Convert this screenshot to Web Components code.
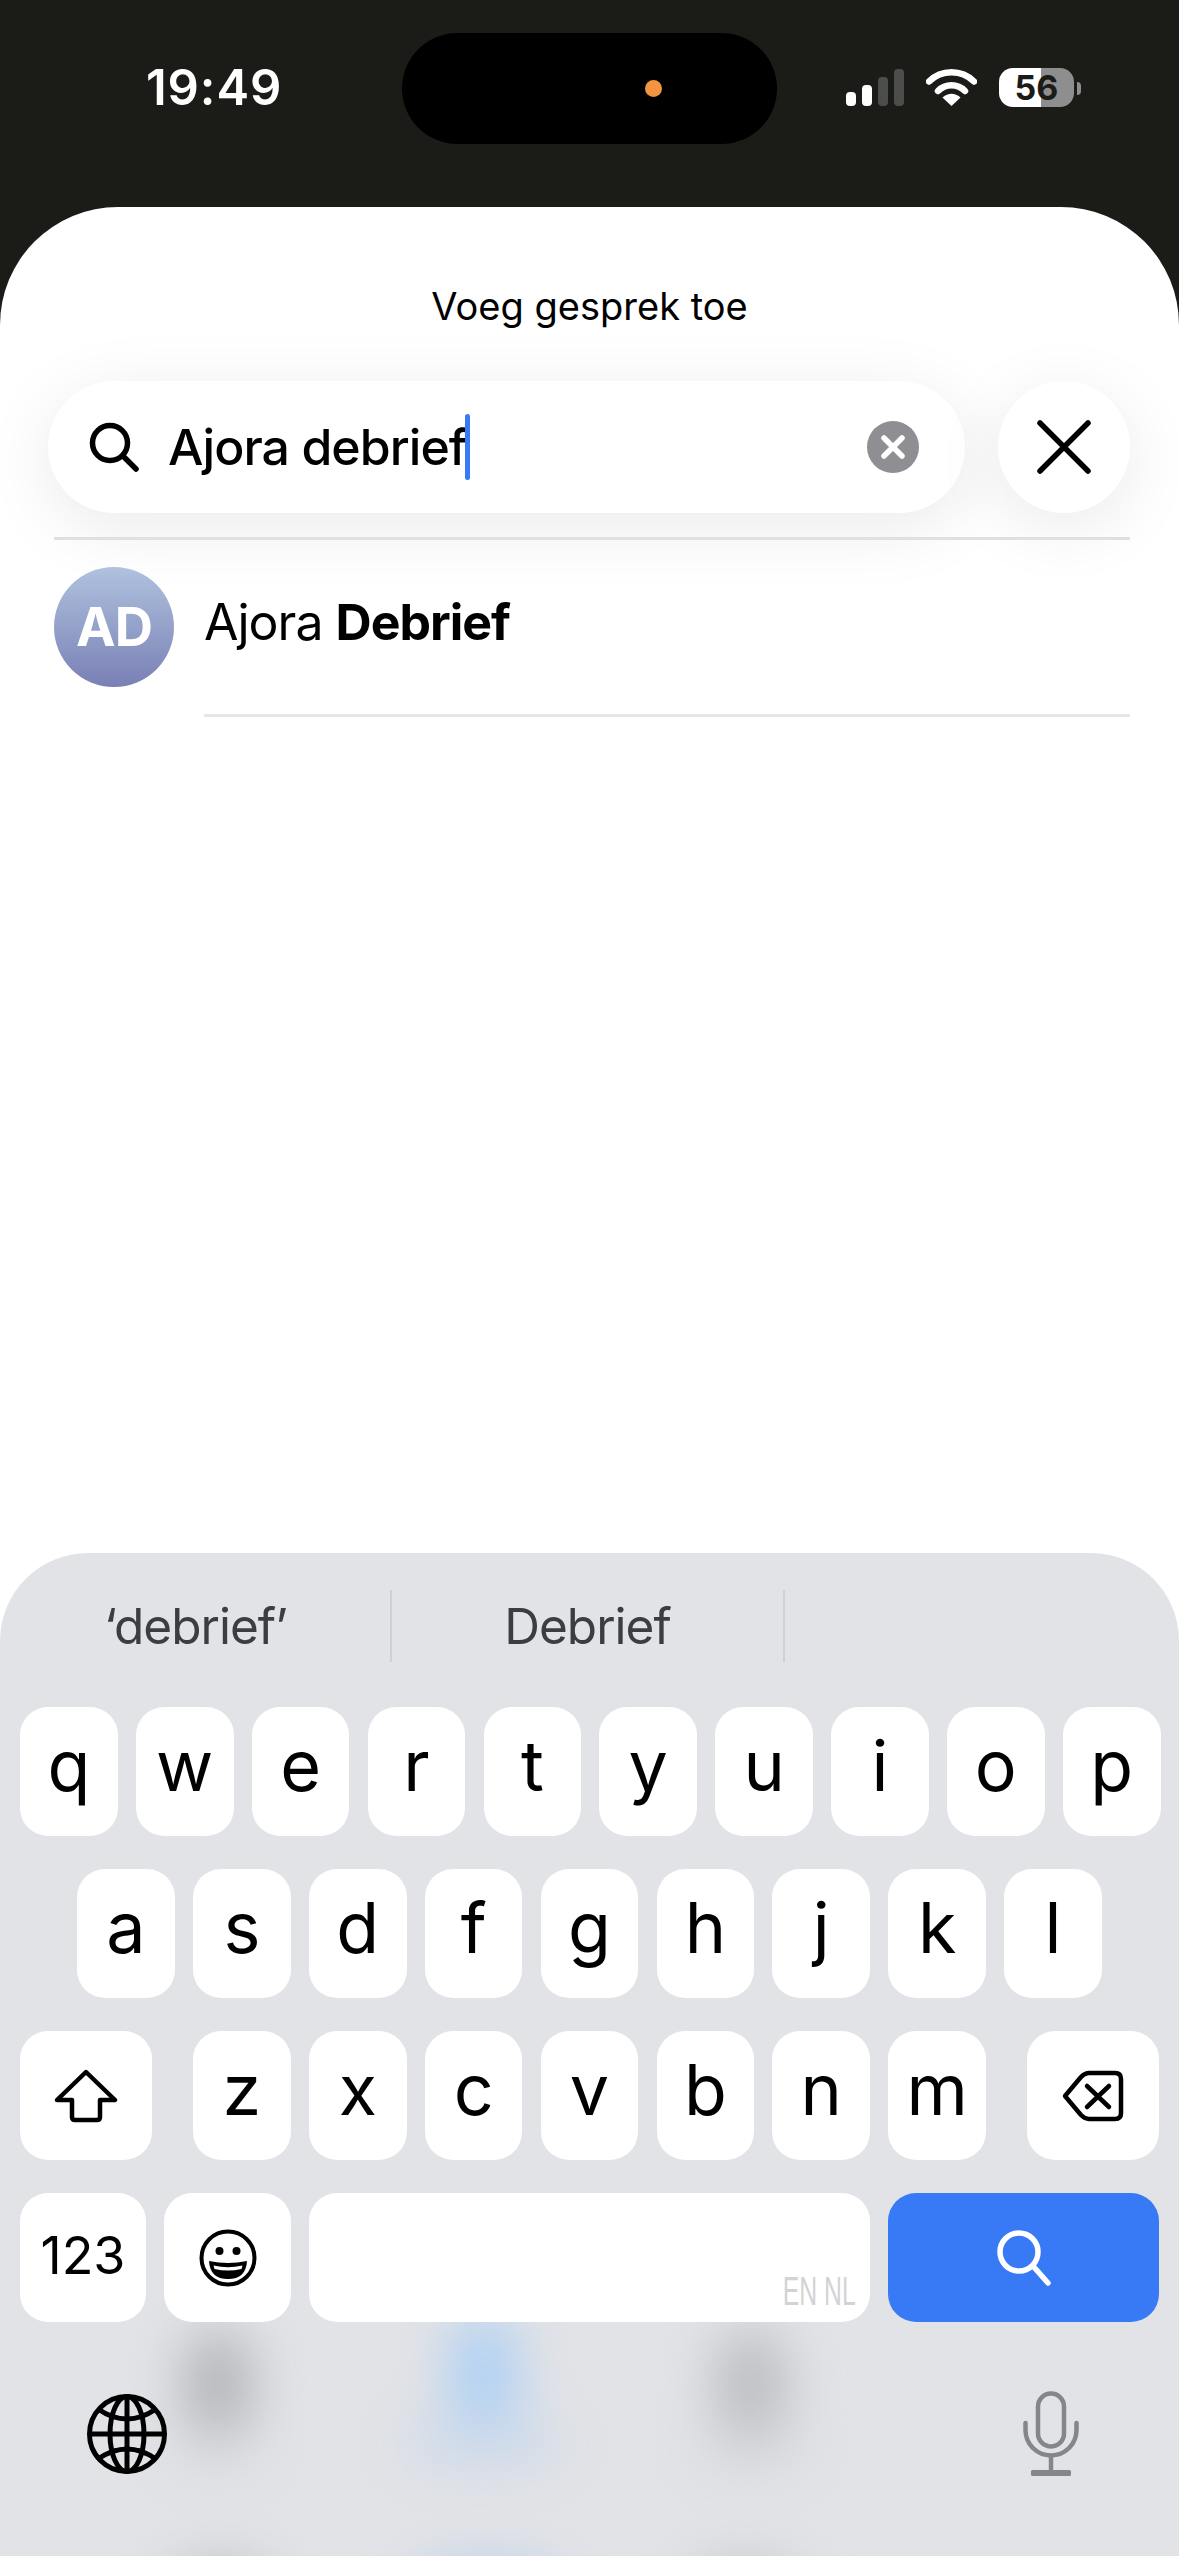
<!DOCTYPE html>
<html lang="nl">
<head>
<meta charset="utf-8">
<title>Voeg gesprek toe</title>
<style>
    html, body { margin: 0; padding: 0; background: #1b1c18; }
    body { font-family: Inter, "Noto Sans", sans-serif; }
    #phone { display: flex; flex-direction: column; width: 1179px; height: 2556px; overflow: hidden; }
</style>
</head>
<body>
<div id="phone">
    <status-bar></status-bar>
    <add-chat-sheet heading="Voeg gesprek toe">
        <search-field value="Ajora debrief"></search-field>
        <result-row initials="AD">Ajora <b>Debrief</b></result-row>
    </add-chat-sheet>
</div>

<script>
class StatusBar extends HTMLElement
{
    constructor()
    {
        super();
        this.shadow = this.attachShadow({ mode: "open" });
    }

    connectedCallback()
    {
        this.shadow.innerHTML = `
            <style>
                :host { display: grid; grid-template-columns: 402px 375px 1fr; flex: 0 0 207px; height: 207px; background: #1b1c18; color: #fff; }
                .time { margin-top: 60px; padding-left: 146px; font-size: 49px; line-height: 56px; font-weight: 600; letter-spacing: .9px; }
                .island { position: relative; height: 111px; margin-top: 33px; border-radius: 56px; background: #000; }
                .dot { position: absolute; left: 243px; top: 47px; width: 17px; height: 17px; border-radius: 50%; background: #f49440; }
                .right { display: flex; align-items: flex-start; margin-top: 68px; padding-left: 69px; }
                .bars { display: flex; align-items: flex-end; gap: 6px; height: 38px; }
                .bars i { display: block; width: 10px; border-radius: 4px; background: #4c4e4b; }
                .bars i.on { background: #fff; }
                .wifi { margin-left: 22px; }
                .battery { display: flex; align-items: center; justify-content: center; width: 75px; height: 39px; margin-left: 22px; border-radius: 14px; background: linear-gradient(90deg, #fff 0, #fff 42px, #8e8e8e 42px); color: #1b1c18; font-size: 34px; font-weight: 700; letter-spacing: 0; }
                .nub { width: 4px; height: 13px; margin: 14px 0 0 3px; border-radius: 0 7px 7px 0; background: #8e8e8e; }
            </style>
            <div class="time">19:49</div>
            <div class="island"><span class="dot"></span></div>
            <div class="right">
                <div class="bars">
                    <i class="on" style="height:14px"></i><i class="on" style="height:21px"></i><i style="height:29px"></i><i style="height:37px"></i>
                </div>
                <svg class="wifi" width="51" height="38" viewBox="0 0 51 38">
                    <path d="M3 13.5a32 32 0 0 1 45 0" fill="none" stroke="#fff" stroke-width="6.5" stroke-linecap="round"/>
                    <path d="M12 23a19 19 0 0 1 27 0" fill="none" stroke="#fff" stroke-width="6.5" stroke-linecap="round"/>
                    <path d="M25.5 38 L16.5 29.5 Q25.5 22 34.5 29.5 Z" fill="#fff"/>
                </svg>
                <div class="battery">56</div>
                <div class="nub"></div>
            </div>
        `;
    }
}

class AddChatSheet extends HTMLElement
{
    constructor()
    {
        super();
        this.shadow = this.attachShadow({ mode: "open" });
    }

    connectedCallback()
    {
        this.shadow.innerHTML = `
            <style>
                :host { display: flex; flex-direction: column; flex: 1; min-height: 0; border-radius: 118px 118px 0 0; background: #fff; }
                .title { margin: 0; padding-top: 77px; height: 44px; text-align: center; font-size: 38px; line-height: 44px; font-weight: 400; color: #000; }
                .list { display: flex; flex-direction: column; flex: 1; padding-top: 53px; }
                ios-keyboard { margin-top: auto; }
            </style>
            <h1 class="title">${this.getAttribute("heading")}</h1>
            <div class="list"><slot></slot></div>
            <ios-keyboard></ios-keyboard>
        `;
    }
}

class SearchField extends HTMLElement
{
    constructor()
    {
        super();
        this.shadow = this.attachShadow({ mode: "open" });
    }

    connectedCallback()
    {
        this.shadow.innerHTML = `
            <style>
                :host { display: flex; flex-direction: column; padding: 0 49px 0 48px; }
                .row { display: flex; gap: 33px; }
                .pill, .close { height: 132px; background: #fff; box-shadow: 0 14px 70px rgba(0, 0, 0, .085); }
                .pill { display: flex; align-items: center; flex: 1; padding: 0 46px 0 41px; border-radius: 66px; }
                .close { display: flex; align-items: center; justify-content: center; flex: 0 0 132px; border-radius: 50%; }
                .text { margin-left: 29px; font-size: 50px; line-height: 60px; font-weight: 500; letter-spacing: -.95px; color: #000; }
                .caret { width: 5px; height: 66px; margin-left: -2px; border-radius: 3px; background: #387af6; }
                .clear { margin-left: auto; }
                hr { height: 3px; margin: 24px 0 0 6px; border: 0; background: #e0e0e2; }
            </style>
            <div class="row">
                <div class="pill">
                    <svg width="50" height="50" viewBox="0 0 50 50" fill="none" stroke="#000" stroke-width="5.5" stroke-linecap="round">
                        <circle cx="21" cy="21" r="17.5"/><path d="M34 34 L47 47"/>
                    </svg>
                    <span class="text">${this.getAttribute("value")}</span>
                    <span class="caret"></span>
                    <svg class="clear" width="52" height="52" viewBox="0 0 52 52">
                        <circle cx="26" cy="26" r="26" fill="#8e8e93"/>
                        <path d="M17 17 L35 35 M35 17 L17 35" stroke="#fff" stroke-width="5.5" stroke-linecap="round"/>
                    </svg>
                </div>
                <div class="close">
                    <svg width="54" height="54" viewBox="0 0 54 54"><path d="M3 3 L51 51 M51 3 L3 51" stroke="#000" stroke-width="5.5" stroke-linecap="round"/></svg>
                </div>
            </div>
            <hr>
        `;
    }
}

class ResultRow extends HTMLElement
{
    constructor()
    {
        super();
        this.shadow = this.attachShadow({ mode: "open" });
    }

    connectedCallback()
    {
        this.shadow.innerHTML = `
            <style>
                :host { display: flex; align-items: flex-start; gap: 30px; margin: 0 49px 0 54px; padding-top: 27px; }
                .avatar { display: flex; align-items: center; justify-content: center; flex: 0 0 120px; height: 120px; border-radius: 50%; background: linear-gradient(#afc2de, #7980b5); color: #fff; font-size: 53px; font-weight: 700; letter-spacing: -1px; }
                .body { flex: 1; display: flex; flex-direction: column; }
                .name { height: 150px; padding-top: 25px; box-sizing: border-box; font-size: 50px; line-height: 60px; letter-spacing: -1px; color: #000; border-bottom: 3px solid #e6e6e8; }
            </style>
            <div class="avatar">${this.getAttribute("initials")}</div>
            <div class="body"><div class="name"><slot></slot></div></div>
        `;
    }
}

class KbKey extends HTMLElement
{
    constructor()
    {
        super();
        this.shadow = this.attachShadow({ mode: "open" });
    }

    connectedCallback()
    {
        this.shadow.innerHTML = `
            <style>
                :host { display: flex; align-items: center; justify-content: center; box-sizing: border-box; flex: 0 0 97.7px; height: 129px; padding-bottom: 12px; border-radius: 28px; background: #fff; color: #000; font-size: 70px; line-height: 1; }
                :host([kind="icon"]) { padding-bottom: 0; }
                :host([kind="blue"]) { padding-bottom: 0; background: #387af6; }
            </style>
            <slot></slot>
        `;
    }
}

class IosKeyboard extends HTMLElement
{
    constructor()
    {
        super();
        this.shadow = this.attachShadow({ mode: "open" });
    }

    keys(letters)
    {
        return letters.split("").map(l => `<kb-key>${l}</kb-key>`).join("");
    }

    connectedCallback()
    {
        this.shadow.innerHTML = `
            <style>
                :host { display: flex; flex-direction: column; position: relative; flex: 0 0 1003px; height: 1003px; overflow: hidden; border-radius: 88px 88px 0 0; background: #e2e3e7; }
                .blur { position: absolute; inset: 0; filter: blur(26px); }
                .blur i { position: absolute; display: block; border-radius: 50%; }
                .suggest { position: relative; display: grid; grid-template-columns: 391px 393px 1fr; height: 72px; margin-top: 37px; margin-bottom: 45px; font-size: 49.5px; line-height: 72px; letter-spacing: -1px; color: #3c3c43; text-align: center; }
                .suggest span + span { box-shadow: -1px 0 0 #cfd0d4, inset 1px 0 0 #cfd0d4; }
                .rows { position: relative; display: flex; flex-direction: column; gap: 33px; padding: 0 20px; }
                .row { display: flex; gap: 18.2px; }
                .center { justify-content: center; }
                .between { justify-content: space-between; }
                .mid { display: flex; gap: 18.2px; }
                .wide { flex: 0 0 132px; }
                .n123 { flex: 0 0 126px; font-size: 52px; padding-bottom: 4px; letter-spacing: 0; }
                .emoji { flex: 0 0 127px; }
                .space { flex: 1; position: relative; }
                .langs { position: absolute; right: 14px; bottom: 15px; font-family: "Liberation Sans", sans-serif; font-size: 40px; line-height: 32px; color: #d3d3d6; transform: scaleX(.62); transform-origin: right bottom; white-space: nowrap; }
                .go { flex: 0 0 271px; }
                .bottom { position: relative; display: flex; justify-content: space-between; align-items: center; padding: 69px 100px 0 87px; }
            </style>
            <div class="blur">
                <i style="left:182px;top:775px;width:72px;height:115px;background:#b4b5b8"></i>
                <i style="left:448px;top:760px;width:72px;height:125px;background:#aed0f4"></i>
                <i style="left:714px;top:775px;width:74px;height:115px;background:#bcbdc0"></i>
                <i style="left:170px;top:875px;width:90px;height:40px;background:#d8d9dc"></i>
                <i style="left:400px;top:865px;width:165px;height:50px;background:#cddaea"></i>
                <i style="left:695px;top:875px;width:110px;height:40px;background:#d6d7da"></i>
                <i style="left:170px;top:1018px;width:100px;height:30px;background:#a4a5a9"></i>
                <i style="left:410px;top:1018px;width:150px;height:30px;background:#9cc3ef"></i>
                <i style="left:690px;top:1018px;width:110px;height:30px;background:#b0b1b5"></i>
            </div>
            <div class="suggest">
                <span>‘debrief’</span>
                <span>Debrief</span>
                <span></span>
            </div>
            <div class="rows">
                <div class="row">${this.keys("qwertyuiop")}</div>
                <div class="row center">${this.keys("asdfghjkl")}</div>
                <div class="row between">
                    <kb-key class="wide" kind="icon">
                        <svg width="64" height="54" viewBox="-2 -2 64 54" fill="none" stroke="#000" stroke-width="4.5" stroke-linejoin="round">
                            <path d="M30 1 L59 29 H44 V46 Q44 49 41 49 H19 Q16 49 16 46 V29 H1 Z"/>
                        </svg>
                    </kb-key>
                    <div class="mid">${this.keys("zxcvbnm")}</div>
                    <kb-key class="wide" kind="icon">
                        <svg width="62" height="52" viewBox="0 0 62 52" fill="none" stroke="#000" stroke-width="4.5" stroke-linejoin="round" stroke-linecap="round">
                            <path d="M3 26 L19 7 Q23 3 27 3 H53 Q59 3 59 9 V43 Q59 49 53 49 H27 Q23 49 19 45 Z"/>
                            <path d="M25 16 L47 37 M47 16 L25 37"/>
                        </svg>
                    </kb-key>
                </div>
                <div class="row">
                    <kb-key class="n123">123</kb-key>
                    <kb-key class="emoji" kind="icon">
                        <svg width="58" height="58" viewBox="0 0 58 58">
                            <circle cx="29" cy="29" r="26.5" fill="none" stroke="#000" stroke-width="4"/>
                            <circle cx="20.5" cy="22" r="4"/><circle cx="37.5" cy="22" r="4"/>
                            <path d="M10 32 Q29 36 48 32 Q47 50 29 50 Q11 50 10 32 Z"/>
                            <path d="M14.5 36.5 Q29 40 43.5 36.5 L42.5 40 Q29 43 15.5 40 Z" fill="#fff"/>
                        </svg>
                    </kb-key>
                    <kb-key class="space"><span class="langs">EN NL</span></kb-key>
                    <kb-key class="go" kind="blue">
                        <svg width="54" height="56" viewBox="0 0 54 56" fill="none" stroke="#fff" stroke-width="5.5" stroke-linecap="round">
                            <circle cx="22" cy="22" r="19"/><path d="M36 36 L51 53"/>
                        </svg>
                    </kb-key>
                </div>
            </div>
            <div class="bottom">
                <svg width="80" height="80" viewBox="0 0 80 80" fill="none" stroke="#000" stroke-width="5">
                    <circle cx="40" cy="40" r="37.5"/>
                    <ellipse cx="40" cy="40" rx="17" ry="37.5"/>
                    <path d="M40 2 V78 M2 40 H78"/>
                    <path d="M11 15 Q40 35 69 15 M11 65 Q40 45 69 65"/>
                </svg>
                <svg width="56" height="85" viewBox="0 0 56 85" fill="none" stroke="#86868a" stroke-width="4.5">
                    <rect x="15" y="2.5" width="26" height="53" rx="13"/>
                    <path d="M2.5 32 V39 A25.5 25.5 0 0 0 53.5 39 V32" stroke-linecap="round"/>
                    <path d="M28 65 V80"/>
                    <rect x="8" y="79" width="40" height="6" rx="1.5" fill="#86868a" stroke="none"/>
                </svg>
            </div>
        `;
    }
}

customElements.define("status-bar", StatusBar);
customElements.define("add-chat-sheet", AddChatSheet);
customElements.define("search-field", SearchField);
customElements.define("result-row", ResultRow);
customElements.define("kb-key", KbKey);
customElements.define("ios-keyboard", IosKeyboard);
</script>
</body>
</html>
